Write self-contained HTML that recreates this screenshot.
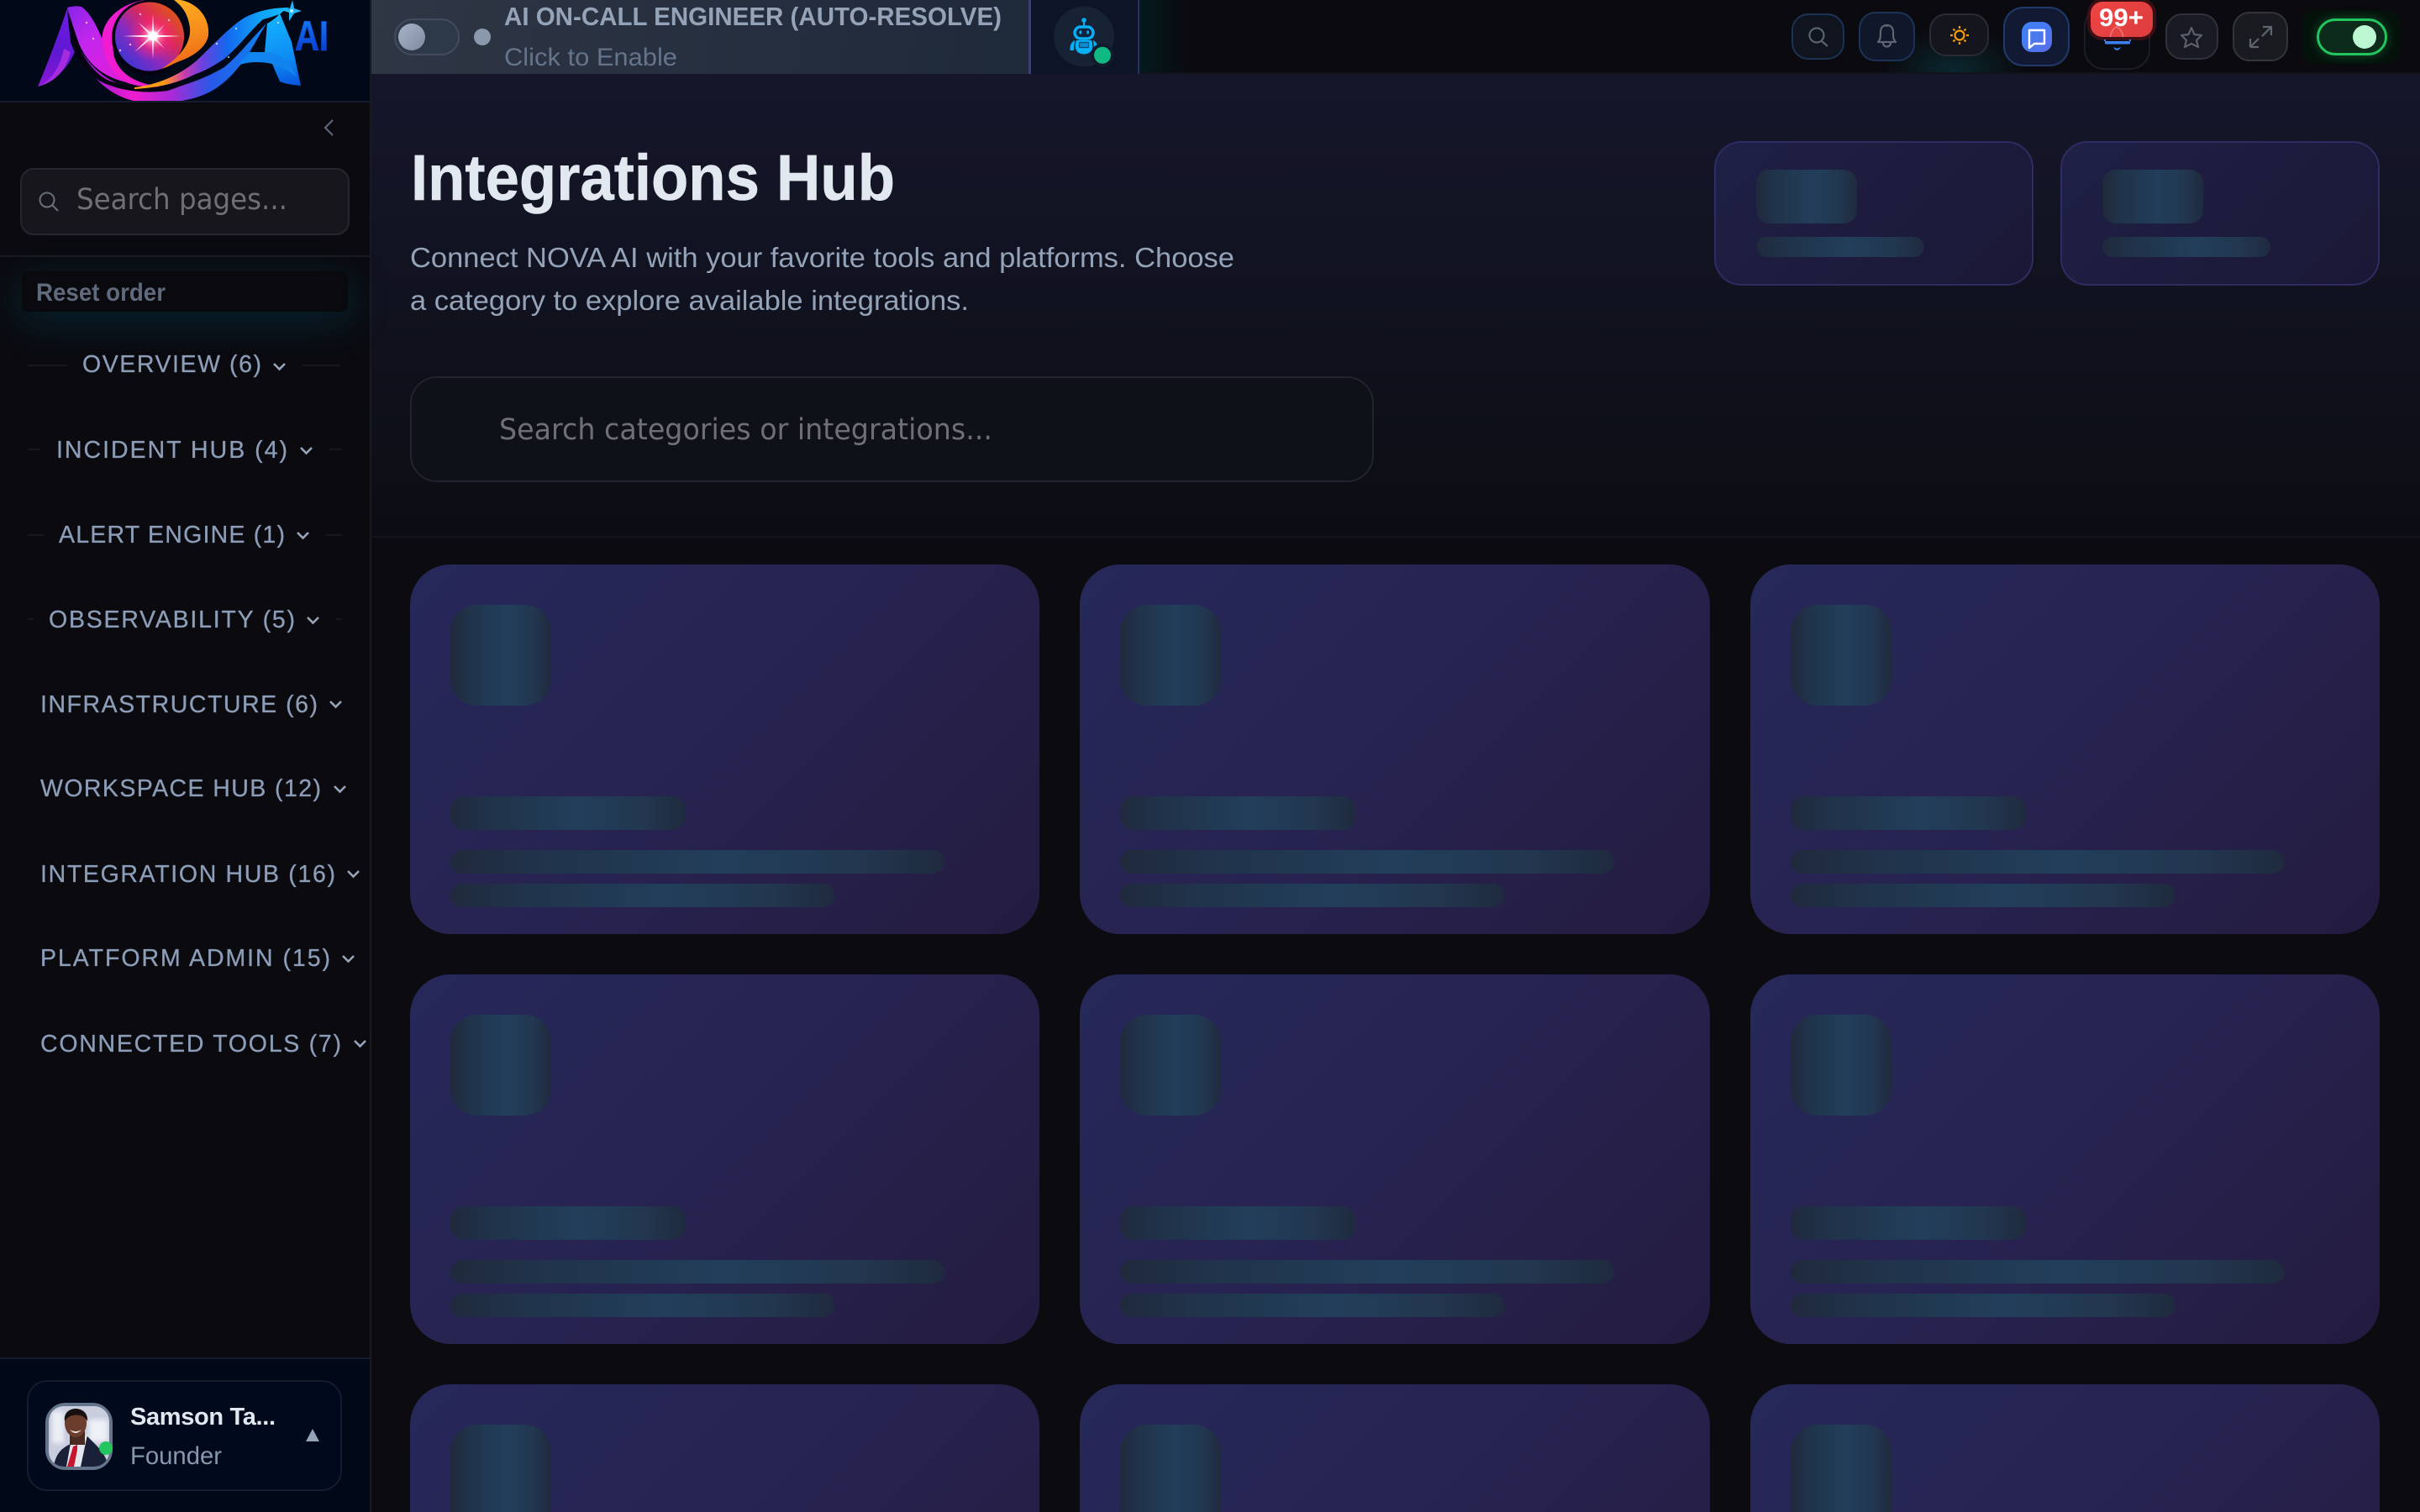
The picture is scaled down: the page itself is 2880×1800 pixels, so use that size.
<!DOCTYPE html>
<html lang="en"><head><meta charset="utf-8"><title>Integrations Hub</title>
<style>
html,body{margin:0;padding:0;width:2880px;height:1800px;overflow:hidden;background:#0b0b10}
div{position:absolute;box-sizing:border-box}
#root{left:0;top:0;width:2880px;height:1800px;overflow:hidden;background:#0b0b10}
svg{position:absolute;left:0;top:0}
.card{width:749.33px;height:440px;border-radius:48px;background:linear-gradient(135deg,#26285a 0%,#272350 50%,#241b3f 100%);overflow:hidden}
.cut{height:152px;border-radius:48px 48px 0 0;background-size:100% 440px;background-repeat:no-repeat}
.sk{background:linear-gradient(90deg,#20293c 0%,#20334a 18%,#223e5a 55%,#223750 82%,#1f2a3e 100%)}
.ic{left:48px;top:48px;width:120px;height:120px;border-radius:32px}
.cut .ic{height:104px;border-radius:32px 32px 0 0;background-size:100% 120px}
.t{left:48px;top:276px;width:280px;height:40px;border-radius:16px}
.l1{left:48px;top:340px;width:588px;height:28px;border-radius:14px}
.l2{left:48px;top:380px;width:458px;height:28px;border-radius:14px}
.stat{top:168px;width:380px;height:172px;border-radius:32px;background:linear-gradient(135deg,#1f2046,#1b1836);border:2px solid #2e2c62}
.s1{left:48px;top:32px;width:120px;height:64px;border-radius:16px}
.s2{left:48px;top:112px;width:200px;height:24px;border-radius:12px}
.btn{border-radius:20px;border:2px solid #2a2b34;background:#15161d}
</style></head>
<body>
<div id="root">
<!-- main background -->
<div style="left:442px;top:88px;width:2438px;height:552px;background:linear-gradient(180deg,#15162a 0%,#11121f 50%,#0c0d13 100%);border-bottom:2px solid #14141e"></div>
<div style="left:442px;top:640px;width:2438px;height:1160px;background:#0b0b10"></div>

<!-- sidebar -->
<div style="left:0;top:0;width:442px;height:1800px;background:#0a0a0f;border-right:2px solid #191a22"></div>
<div style="left:0;top:0;width:440px;height:122px;background:#010818;border-bottom:2px solid #141c2c"></div>
<div style="left:24px;top:200px;width:392px;height:80px;border-radius:16px;background:#16161c;border:2px solid #26272e"></div>
<div style="left:0;top:304px;width:440px;height:2px;background:#191a22"></div>
<div style="left:26px;top:323px;width:388px;height:48px;border-radius:8px;background:#09090e;box-shadow:0 12px 44px 8px rgba(6,110,140,.2)"></div>
<div style="left:0;top:1616px;width:440px;height:184px;background:#010818;border-top:2px solid #141c2c"></div>
<div style="left:32px;top:1643px;width:375px;height:132px;border-radius:24px;border:2px solid #141d2d;background:#010a1c"></div>

<!-- top bar -->
<div style="left:442px;top:0;width:2438px;height:88px;background:#0a0a0f;border-bottom:2px solid #13131b"></div>
<div style="left:1356px;top:0;width:60px;height:86px;background:linear-gradient(90deg,#041a1e,#0a0a0f 100%)"></div>
<div style="left:442px;top:0;width:782px;height:88px;background:linear-gradient(100deg,#2f3644,#1e293a);"></div>
<div style="left:1224px;top:0;width:132px;height:88px;background:#0e1428;border-left:3px solid #3c4270;border-right:2px solid #2a2f5c"></div>
<div style="left:469px;top:22px;width:78px;height:44px;border-radius:22px;background:#2d3848;border:2px solid #434c5e"></div>
<div style="left:2240px;top:30px;width:170px;height:56px;background:radial-gradient(ellipse 50% 100% at 50% 100%,rgba(8,120,130,.28),rgba(8,120,130,0) 100%)"></div>
<div class="btn" style="left:2132px;top:16px;width:63px;height:55px;border-color:#1c3356;background:#10141f"></div>
<div class="btn" style="left:2212px;top:14px;width:67px;height:59px;border-color:#1c3356;background:#10172a"></div>
<div class="btn" style="left:2296px;top:16px;width:71px;height:51px;background:#15161d"></div>
<div class="btn" style="left:2384px;top:8px;width:79px;height:71px;border-radius:24px;border-color:#1f3a68;background:#121a33"></div>
<div class="btn" style="left:2480px;top:8px;width:79px;height:75px;border-radius:24px;border-color:#1c1d24;background:#0b0c12"></div>
<div class="btn" style="left:2577px;top:16px;width:63px;height:55px;background:#191a24;border-color:#30313a"></div>
<div class="btn" style="left:2657px;top:14px;width:66px;height:59px;background:#1a1b21;border-color:#33343a"></div>
<div style="left:2740px;top:12px;width:116px;height:64px;border-radius:16px;background:#05120c"></div>
<div style="left:2757px;top:22px;width:84px;height:44px;border-radius:22px;background:#0d2b1b;border:3px solid #22c55e;box-shadow:0 0 12px rgba(34,197,94,.35)"></div>
<div style="left:2406px;top:26px;width:36px;height:36px;border-radius:12px;background:linear-gradient(135deg,#3b82f6,#5b6ee8)"></div>
<div style="left:2488px;top:2px;width:74px;height:42px;border-radius:14px;background:linear-gradient(135deg,#ef4444,#dc3d3d);box-shadow:0 0 0 4px rgba(90,18,24,.6)"></div>

<!-- stat skeleton -->
<div class="stat" style="left:2040px"><div class="sk s1"></div><div class="sk s2"></div></div>
<div class="stat" style="left:2452px"><div class="sk s1"></div><div class="sk s2"></div></div>
<!-- main search -->
<div style="left:488px;top:448px;width:1147px;height:126px;border-radius:32px;background:#0f1119;border:2px solid #22232e"></div>

<!-- grid -->
<div class="card" style="left:488px;top:672px"><div class="sk ic"></div><div class="sk t"></div><div class="sk l1"></div><div class="sk l2"></div></div>
<div class="card" style="left:1285.33px;top:672px"><div class="sk ic"></div><div class="sk t"></div><div class="sk l1"></div><div class="sk l2"></div></div>
<div class="card" style="left:2082.67px;top:672px"><div class="sk ic"></div><div class="sk t"></div><div class="sk l1"></div><div class="sk l2"></div></div>
<div class="card" style="left:488px;top:1160px"><div class="sk ic"></div><div class="sk t"></div><div class="sk l1"></div><div class="sk l2"></div></div>
<div class="card" style="left:1285.33px;top:1160px"><div class="sk ic"></div><div class="sk t"></div><div class="sk l1"></div><div class="sk l2"></div></div>
<div class="card" style="left:2082.67px;top:1160px"><div class="sk ic"></div><div class="sk t"></div><div class="sk l1"></div><div class="sk l2"></div></div>
<div class="card cut" style="left:488px;top:1648px"><div class="sk ic"></div></div>
<div class="card cut" style="left:1285.33px;top:1648px"><div class="sk ic"></div></div>
<div class="card cut" style="left:2082.67px;top:1648px"><div class="sk ic"></div></div>

<svg width="2880" height="1800" viewBox="0 0 2880 1800" xmlns="http://www.w3.org/2000/svg" font-family="'Liberation Sans',sans-serif">
<defs>
<linearGradient id="up" x1="80" x2="150" y1="10" y2="100" gradientUnits="userSpaceOnUse"><stop offset="0" stop-color="#8a24e8"/><stop offset=".4" stop-color="#c426ec"/><stop offset="1" stop-color="#e31cd8"/></linearGradient>
<linearGradient id="low" x1="90" x2="320" y1="0" y2="0" gradientUnits="userSpaceOnUse"><stop offset="0" stop-color="#7a18d8"/><stop offset=".3" stop-color="#f01cd0"/><stop offset=".5" stop-color="#a82ad8"/><stop offset=".7" stop-color="#2858e8"/><stop offset="1" stop-color="#0c86f4"/></linearGradient>
<linearGradient id="blu" x1="195" x2="340" y1="0" y2="0" gradientUnits="userSpaceOnUse"><stop offset="0" stop-color="#ff9a18"/><stop offset=".17" stop-color="#c83cb0"/><stop offset=".32" stop-color="#6a40e0"/><stop offset=".52" stop-color="#1468ee"/><stop offset=".8" stop-color="#10a4fa"/><stop offset="1" stop-color="#14b8ff"/></linearGradient>
<linearGradient id="leg" x1="45" x2="90" y1="100" y2="20" gradientUnits="userSpaceOnUse"><stop offset="0" stop-color="#8a18d4"/><stop offset=".5" stop-color="#5f18d2"/><stop offset="1" stop-color="#6a1ce0"/></linearGradient>
<linearGradient id="orb" x1="148" x2="218" y1="82" y2="12" gradientUnits="userSpaceOnUse"><stop offset="0" stop-color="#3038d8"/><stop offset=".35" stop-color="#8a2ac0"/><stop offset=".62" stop-color="#d8285c"/><stop offset="1" stop-color="#e0600c"/></linearGradient>
<radialGradient id="glow" cx="182" cy="43" r="30" gradientUnits="userSpaceOnUse"><stop offset="0" stop-color="#fff"/><stop offset=".22" stop-color="#ff80b0"/><stop offset=".55" stop-color="#ff2878" stop-opacity=".55"/><stop offset="1" stop-color="#ff2878" stop-opacity="0"/></radialGradient>
<linearGradient id="ora" x1="215" x2="240" y1="0" y2="70" gradientUnits="userSpaceOnUse"><stop offset="0" stop-color="#ffae1e"/><stop offset=".6" stop-color="#f58a1c"/><stop offset="1" stop-color="#f06a18"/></linearGradient>
<linearGradient id="ablue" x1="330" x2="350" y1="15" y2="105" gradientUnits="userSpaceOnUse"><stop offset="0" stop-color="#14b4ff"/><stop offset=".6" stop-color="#0e8cf4"/><stop offset="1" stop-color="#0a50dc"/></linearGradient>
<linearGradient id="aitxt" x1="0" x2="0" y1="24" y2="62" gradientUnits="userSpaceOnUse"><stop offset="0" stop-color="#1478ee"/><stop offset="1" stop-color="#0a3cd0"/></linearGradient>
<linearGradient id="knob" x1="0" x2="1" y1="0" y2="1"><stop offset="0" stop-color="#a8b4c8"/><stop offset="1" stop-color="#7d8aa0"/></linearGradient>
<clipPath id="logoclip"><rect x="0" y="0" width="440" height="120"/></clipPath>
<clipPath id="avclip"><rect x="58" y="1674" width="72" height="72" rx="18"/></clipPath>
<filter id="b2"><feGaussianBlur stdDeviation="3"/></filter>
<filter id="b1"><feGaussianBlur stdDeviation="1"/></filter>
</defs>

<!-- LOGO -->
<g clip-path="url(#logoclip)">
<!-- lower ribbon -->
<path d="M92 52 C105 80 130 100 163 107 C197 110 232 100 267 80 C285 65 300 45 317 28 L297 62 C285 80 272 95 260 103 C240 118 210 124 170 122 C135 118 105 95 92 52Z" fill="url(#low)"/>
<!-- left wedge -->
<path d="M45 103 C58 72 70 40 80 10 L92 52 C88 70 72 95 45 103Z" fill="url(#leg)"/>
<path d="M45 103 C62 96 72 78 76 58 L84 62 C78 85 65 98 45 103Z" fill="#a52be0"/>
<!-- black line under strand -->
<path d="M80 13 C86 28 89 40 92 50 C100 72 115 90 130 96 C150 104 180 106 200 102 L227 98 L200 108 C170 112 140 108 118 96 C102 84 90 68 84 50Z" fill="#050312"/>
<!-- upper strand -->
<path d="M80 9 C86 7 92 7 97 8 C106 14 114 28 122 47 C124 66 134 86 150 98 C125 92 105 78 94 52 C89 38 84 22 80 9Z" fill="url(#up)"/>
<!-- magenta ring -->
<path d="M172 0 C135 6 118 32 122 52 C124 72 136 90 152 99 C168 104 182 104 190 103 C165 100 143 90 136 68 C130 45 142 14 172 0Z" fill="#f01cd0"/>
<!-- orb -->
<circle cx="178" cy="45" r="45" fill="#050312"/>
<circle cx="178" cy="43.5" r="41" fill="url(#orb)"/>
<circle cx="182" cy="43" r="30" fill="url(#glow)"/>
<path d="M182 17 L183.2 41.5 L215 43 L183.2 44.5 L182 70 L180.8 44.5 L146 43 L180.8 41.5Z" fill="#fff"/>
<path d="M165 27 L183 41.5 L196 29 L184 44 L196 58 L181.5 45 L160 62 L179 43Z" fill="#ffd8e6"/>
<circle cx="182" cy="43" r="6" fill="#fff" filter="url(#b1)"/>
<g fill="#ffb8e0"><circle cx="167" cy="17" r="1.2"/><circle cx="201" cy="24" r="1.2"/><circle cx="155" cy="53" r="1.2"/><circle cx="143" cy="60" r="1.2"/><circle cx="111" cy="46" r="1.2"/><circle cx="103" cy="27" r="1.2"/></g>
<!-- orange crescent -->
<path d="M207 0 L215 0 C236 4 250 22 248 42 C246 55 232 66 216 72 C205 76 200 80 192 82 C212 70 228 52 226 33 C224 18 218 8 207 0Z" fill="url(#ora)"/>
<path d="M150 103 C178 108 205 100 230 84 L200 100 C185 104 165 106 150 103Z" fill="#ff9a18"/>
<!-- upper blue ribbon -->
<path d="M160 104 C195 100 220 84 233 73 C245 62 252 54 260 47 C272 35 285 24 293 20 C310 12 325 9 345 9 C338 12 335 15 333 17 C326 19 318 22 313 23 C305 30 298 38 290 47 C282 56 275 63 267 70 C252 80 242 85 233 88 C215 97 195 104 160 106Z" fill="url(#blu)"/>
<!-- A leg -->
<path d="M318 28 C325 24 330 20 333 16 L347 50 L358 102 C348 101 340 100 333 97 C330 90 327 84 325 78 C320 70 317 66 315 62Z" fill="url(#ablue)"/>
<!-- crossbar -->
<path d="M283 78 C288 72 292 68 297 62 L315 62 C330 62 345 72 353 92 C340 80 325 74 305 74 C295 74 288 76 283 78Z" fill="#1284f0"/>
<path d="M348 0 L350 10 L359 13 L350 16 L344 25 L344 15 L335 12 L345 10Z" fill="#22b8ff"/>
<circle cx="347" cy="13" r="2" fill="#c8f0ff"/>
<g fill="#a8e0ff"><circle cx="281" cy="34" r="1.2"/><circle cx="258" cy="52" r="1.2"/><circle cx="331" cy="27" r="1.2"/><circle cx="272" cy="68" r="1"/></g>
<text x="351" y="60" font-size="50" font-weight="700" fill="url(#aitxt)" stroke="#0a4ad8" stroke-width=".8" textLength="40" lengthAdjust="spacingAndGlyphs">AI</text>
</g>

<!-- sidebar chevron + search -->
<path d="M396 143 L387 152 L396 161" fill="none" stroke="#5f6b7c" stroke-width="2"/>
<circle cx="56" cy="238" r="8.5" fill="none" stroke="#6a6f78" stroke-width="2"/><path d="M62 244 L69 251" stroke="#6a6f78" stroke-width="2"/>
<text x="91" y="249" font-family="'DejaVu Sans',sans-serif" font-size="35" fill="#6f7074" textLength="251" lengthAdjust="spacingAndGlyphs">Search pages...</text>
<text x="43" y="358" font-size="29.5" font-weight="700" fill="#5f6a7c" textLength="154" lengthAdjust="spacingAndGlyphs">Reset order</text>

<!-- nav -->
<g font-size="28.5" fill="#8c9db8" stroke="#8c9db8" stroke-width=".3">
<text x="98" y="443" textLength="213">OVERVIEW (6)</text>
<text x="67" y="545" textLength="275">INCIDENT HUB (4)</text>
<text x="70" y="646" textLength="269">ALERT ENGINE (1)</text>
<text x="58" y="747" textLength="293">OBSERVABILITY (5)</text>
<text x="48" y="848" textLength="330">INFRASTRUCTURE (6)</text>
<text x="48" y="948" textLength="334">WORKSPACE HUB (12)</text>
<text x="48" y="1050" textLength="351">INTEGRATION HUB (16)</text>
<text x="48" y="1150" textLength="345">PLATFORM ADMIN (15)</text>
<text x="48" y="1252" textLength="358">CONNECTED TOOLS (7)</text>
</g>
<g fill="none" stroke="#97a5bb" stroke-width="2.6">
<path d="M326 433 L332.5 439.5 L339 433"/>
<path d="M358 533 L364.5 539.5 L371 533"/>
<path d="M354 634 L360.5 640.5 L367 634"/>
<path d="M366 735 L372.5 741.5 L379 735"/>
<path d="M393 835 L399.5 841.5 L406 835"/>
<path d="M398 936 L404.5 942.5 L411 936"/>
<path d="M414 1037 L420.5 1043.5 L427 1037"/>
<path d="M408 1138 L414.5 1144.5 L421 1138"/>
<path d="M422 1239 L428.5 1245.5 L435 1239"/>
</g>
<g stroke="#17181f" stroke-width="2">
<path d="M33 435 H80 M360 435 H405"/><path d="M33 535 H48 M392 535 H407"/><path d="M33 637 H52 M388 637 H407"/><path d="M33 737 H40 M400 737 H407"/>
</g>

<!-- profile -->
<rect x="56" y="1672" width="76" height="76" rx="22" fill="#c6cbdc" stroke="#64748b" stroke-width="4"/>
<g clip-path="url(#avclip)">
<rect x="58" y="1674" width="72" height="72" fill="#c9cedf"/>
<rect x="62" y="1680" width="14" height="38" fill="#eceff6" filter="url(#b2)"/>
<rect x="106" y="1690" width="22" height="26" fill="#eef1f8" filter="url(#b2)"/>
<path d="M64 1746 C66 1732 72 1724 86 1718 L104 1710 C116 1722 126 1730 129 1746Z" fill="#1a2038"/>
<path d="M79 1746 L84 1718 L104 1708 L96 1746Z" fill="#e4e6ee"/>
<path d="M87 1722 L92 1720 L92 1726 L88 1746 L80 1746 Z" fill="#c8142c"/>
<rect x="83" y="1704" width="18" height="16" fill="#4a2a20"/>
<ellipse cx="90" cy="1694" rx="13" ry="17" fill="#6b3d2c"/>
<path d="M77 1692 C74 1672 106 1672 104 1692 C100 1682 82 1682 77 1692Z" fill="#17100e"/>
<path d="M83 1702 Q90 1706 97 1702 Q90 1710 83 1702Z" fill="#efe4e0"/>
</g>
<circle cx="126" cy="1724" r="8" fill="#22c55e"/>
<text x="155" y="1696" font-size="29" font-weight="700" fill="#e2e8f0" textLength="173">Samson Ta...</text>
<text x="155" y="1743" font-size="30" fill="#8797ad" textLength="109" lengthAdjust="spacingAndGlyphs">Founder</text>
<path d="M372 1701 L380 1716 H364Z" fill="#94a3b8"/>

<!-- oncall -->
<ellipse cx="490" cy="44" rx="16" ry="16" fill="url(#knob)"/>
<circle cx="574" cy="44" r="10" fill="#8c98ac"/>
<text x="600" y="30" font-size="30.5" font-weight="700" fill="#94a3b8" textLength="592" lengthAdjust="spacingAndGlyphs">AI ON-CALL ENGINEER (AUTO-RESOLVE)</text>
<text x="600" y="78" font-size="30" fill="#64748b" textLength="206" lengthAdjust="spacingAndGlyphs">Click to Enable</text>
<!-- robot -->
<circle cx="1290" cy="43.5" r="36" fill="#172235"/>
<g fill="#06b0f8">
<rect x="1289" y="25" width="2" height="6"/><circle cx="1290" cy="24" r="2.8"/>
<rect x="1279" y="32" width="22" height="14" rx="7" fill="#10243f" stroke="#06b0f8" stroke-width="3.4"/>
<ellipse cx="1285.8" cy="38.5" rx="1.4" ry="2.2"/><ellipse cx="1294.6" cy="38.5" rx="1.4" ry="2.2"/>
<path d="M1281 48 H1299 C1301 54 1301 60 1296 63 C1292 65 1288 65 1284 63 C1279 60 1279 54 1281 48Z"/>
<path d="M1279 48 C1275 50 1273 54 1273.5 60 L1278 60 L1278.5 53Z M1301 48 C1305 50 1307 54 1306.5 60 L1302 60 L1301.5 53Z"/>
</g>
<rect x="1284.5" y="50.5" width="11" height="6" rx="1" fill="#0a8ccc" stroke="#0c4a78" stroke-width="1.2"/>
<circle cx="1312" cy="65.7" r="14" fill="#121b2c"/>
<circle cx="1312" cy="65.7" r="10" fill="#10b981"/>

<!-- top icons -->
<g fill="none" stroke="#5b626e" stroke-width="2.2">
<circle cx="2162" cy="42" r="8.5"/><path d="M2168 49 L2175 55"/>
</g>
<g fill="none" stroke="#5f6570" stroke-width="2.2" stroke-linejoin="round">
<path d="M2235 50 C2238 47 2238 44 2238 38 C2238 33 2241 30 2245.5 30 C2250 30 2253 33 2253 38 C2253 44 2253 47 2256 50Z"/>
<path d="M2241 51 C2241 57 2250 57 2250 51"/><path d="M2245.5 30 V32"/>
</g>
<g fill="none" stroke="#f59e0b" stroke-width="2.2">
<circle cx="2332" cy="42" r="5.5"/>
<path d="M2332 31 V34 M2332 50 V53 M2321 42 H2324 M2340 42 H2343 M2324.5 34.5 L2326.5 36.5 M2337.5 47.5 L2339.5 49.5 M2324.5 49.5 L2326.5 47.5 M2337.5 36.5 L2339.5 34.5"/>
</g>
<path d="M2415 36 H2433 V52 H2421 L2415 57Z" fill="none" stroke="#fff" stroke-width="2.4" stroke-linejoin="round"/>
<rect x="2505" y="49" width="30" height="3.5" rx="1" fill="#3b82f6"/>
<path d="M2505 49 V47 M2535 49 V47" stroke="#3b82f6" stroke-width="2"/>
<path d="M2515.5 56 C2516 61 2523 61 2523.5 56 L2521 57.5 L2518 57.5Z" fill="#3b82f6"/>
<path d="M2511 44 C2513 38 2514 34 2519 32 C2524 34 2525 38 2527 44" fill="none" stroke="#f29a9a" stroke-width="2" opacity=".5"/>
<text x="2498" y="31" font-size="30" font-weight="700" fill="#fff" textLength="53" lengthAdjust="spacingAndGlyphs">99+</text>
<path d="M2608 33 L2611.5 41 L2620 42 L2614 48 L2616 56 L2608 52 L2600 56 L2602 48 L2596 42 L2604.5 41Z" fill="none" stroke="#5a606c" stroke-width="2.2" stroke-linejoin="round"/>
<g fill="none" stroke="#5f656e" stroke-width="2.2">
<path d="M2693 32 H2703 V42 M2703 32 L2692 43"/>
<path d="M2678 56 H2688 M2678 56 V46 M2678 56 L2688 46"/>
</g>
<ellipse cx="2814" cy="44" rx="14" ry="14" fill="#bbf7d0"/>

<!-- main text -->
<text x="489" y="238" font-size="77" font-weight="700" fill="#e2e8f0" stroke="#e2e8f0" stroke-width=".6" textLength="576" lengthAdjust="spacingAndGlyphs">Integrations Hub</text>
<text x="488" y="318" font-size="33.5" fill="#94a3b8" textLength="981" lengthAdjust="spacingAndGlyphs">Connect NOVA AI with your favorite tools and platforms. Choose</text>
<text x="488" y="369" font-size="33.5" fill="#94a3b8" textLength="665" lengthAdjust="spacingAndGlyphs">a category to explore available integrations.</text>
<text x="594" y="523" font-family="'DejaVu Sans',sans-serif" font-size="35" fill="#6f7074" textLength="587" lengthAdjust="spacingAndGlyphs">Search categories or integrations...</text>
</svg>
</div>
</body></html>
